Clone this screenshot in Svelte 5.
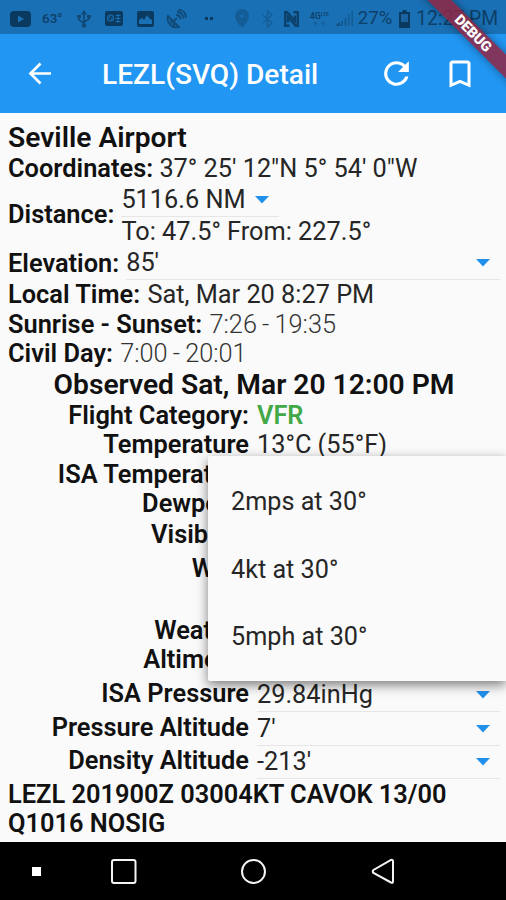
<script>
  const observed = [
    { label: 'Flight Category:', value: 'VFR', kind: 'vfr' },
    { label: 'Temperature', value: '13°C (55°F)' },
    { label: 'ISA Temperature' },
    { label: 'Dewpoint' },
    { label: 'Visibility', kind: 'visibility' },
    { label: 'Wind', kind: 'wind' },
    { label: 'Weather' },
    { label: 'Altimeter' },
    { label: 'ISA Pressure', value: '29.84inHg', kind: 'select' },
    { label: 'Pressure Altitude', value: "7'", kind: 'select' },
    { label: 'Density Altitude', value: "-213'", kind: 'select' },
  ];

  const windOptions = ['2mps at 30°', '4kt at 30°', '5mph at 30°'];
</script>

{#snippet arrow()}
  <svg class="arrow" width="14" height="8" viewBox="0 0 14 8"><path d="M0 0h14L7 7.5z" /></svg>
{/snippet}

<div class="screen">
  <div class="status">
    <div class="notifications">
      <svg class="video" width="21" height="16" viewBox="0 0 21 16">
        <rect width="21" height="16" rx="4" fill="#0b3a60" />
        <path d="M8 4.5v7l6-3.5z" fill="#1a70b4" />
      </svg>
      <span class="degrees">63°</span>
      <svg class="usb" width="14" height="18" viewBox="0 0 14 18" fill="none" stroke="#0f4a78" stroke-width="1.8">
        <path d="M7 2v14M2 7v3l5 3M12 7v2l-5 3" />
        <path d="M4 4.500L7 0l3 4.500z" fill="#0f4a78" stroke="none" />
        <circle cx="7" cy="15.500" r="2.300" fill="#0f4a78" stroke="none" />
        <path d="M0 5h4v3H0zM10 5h4v3h-4z" fill="#0f4a78" stroke="none" />
      </svg>
      <svg class="card" width="18" height="15" viewBox="0 0 18 15">
        <rect width="18" height="15" rx="2" fill="#0b3a60" />
        <circle cx="5.500" cy="7" r="3" fill="none" stroke="#1a70b4" stroke-width="1.200" />
        <path d="M4 5l4 5M10.500 4.500h5M10.500 7.500h5M10.500 10.500h5M13 3v9" stroke="#1a70b4" stroke-width="1" />
      </svg>
      <svg class="photo" width="17" height="16" viewBox="0 0 17 16">
        <rect width="17" height="16" rx="2" fill="#0b3a60" />
        <path d="M2 13V9l3-2 2 2 3-5 2 3 3 2v4z" fill="#1a70b4" />
      </svg>
      <svg class="dish" width="21" height="20" viewBox="0 0 21 20" fill="none" stroke="#0f4a78" stroke-width="1.800">
        <path d="M2 7c-2 7 4 13 11 11zM4 10l6 6M4 14l4-2M7 17l2-4M7 13l4-4" />
        <path d="M10 6c3 0 4.500 2 4.500 4.500M11 3c4 0 6.500 3 6.500 6.500M12 .9c5 0 8 3 8 7.500" />
      </svg>
      <svg class="more" width="8" height="3" viewBox="0 0 8 3"><path d="M0 0h3v3H0zM5 0h3v3H5z" fill="#0b3a60" /></svg>
    </div>
    <div class="system">
      <svg class="pin" width="14" height="19" viewBox="0 0 14 19">
        <path d="M7 0a7 7 0 0 0-7 7c0 5 7 12 7 12s7-7 7-12a7 7 0 0 0-7-7z" fill="#145d97" />
        <circle cx="7" cy="7" r="1.500" fill="#1a70b4" />
      </svg>
      <svg class="bluetooth" width="11" height="18" viewBox="0 0 11 18" fill="none" stroke="#145d97" stroke-width="1.500">
        <path d="M1 5l9 8-4.500 4V1L10 5l-9 8" />
      </svg>
      <svg class="nfc" width="15" height="16" viewBox="0 0 15 16" fill="none" stroke="#0c416b">
        <path d="M5.500 14.800H1.200V1.200h2L11 10V4.500" stroke-width="2.400" />
        <path d="M9.500 1.200h4.300v13.600h-2L4 6v5.500" stroke-width="2.400" />
      </svg>
      <div class="lte">
        <span>4G</span><span class="tail">LTE</span>
        <svg width="12" height="5" viewBox="0 0 12 5"><path d="M0 1h4L2 5zM8 1h4l-2 4z" fill="#145d97" /></svg>
      </div>
      <svg class="signal" width="18" height="17" viewBox="0 0 18 17" fill="#105083">
        <path d="M0 16l5-4v4z" />
        <path d="M6 11h2v5H6zM9.500 8h2v8h-2zM13 4h1.500v12H13zM16.500 1H18v15h-1.500z" opacity=".65" />
      </svg>
      <span class="percent">27%</span>
      <svg class="battery" width="11" height="18" viewBox="0 0 11 18">
        <path d="M3.500 0h4v2H10q1 0 1 1v14q0 1-1 1H1q-1 0-1-1V3q0-1 1-1h2.500z" fill="#0b3a60" />
        <path d="M2 4h7v8H2z" fill="#1a63a0" />
      </svg>
      <span class="clock">12:27 PM</span>
    </div>
  </div>

  <header>
    <svg class="back" width="24" height="23" viewBox="0 0 24 23" fill="none" stroke="#fff" stroke-width="2.700">
      <path d="M23 11.500H2.500M12.500 1.500l-10 10 10 10" />
    </svg>
    <h1>LEZL(SVQ) Detail</h1>
    <svg class="refresh" width="37" height="37" viewBox="0 0 24 24" fill="#fff">
      <path d="M17.650 6.350A7.958 7.958 0 0 0 12 4a8 8 0 1 0 7.730 10h-2.080A6 6 0 1 1 12 6c1.660 0 3.140.690 4.220 1.780L13 11h7V4l-2.350 2.350z" />
    </svg>
    <svg class="bookmark" width="36" height="36" viewBox="0 0 24 24" fill="#fff">
      <path d="M17 3H7c-1.100 0-2 .900-2 2v16l7-3 7 3V5c0-1.100-.900-2-2-2zm0 15l-5-2.180L7 18V5h10v13z" />
    </svg>
  </header>

  <main>
    <h2>Seville Airport</h2>
    <div class="line"><b>Coordinates:</b> 37° 25' 12"N 5° 54' 0"W</div>
    <div class="distance">
      <b>Distance:</b>
      <div>
        <div class="dropdown short"><span>5116.6 NM</span>{@render arrow()}</div>
        <div class="line">To: 47.5° From: 227.5°</div>
      </div>
    </div>
    <div class="elevation">
      <b>Elevation:</b>
      <div class="dropdown"><span>85'</span>{@render arrow()}</div>
    </div>
    <div class="line"><b>Local Time:</b> <span class="time">Sat, Mar 20 8:27 PM</span></div>
    <div class="line"><b>Sunrise - Sunset:</b> <span class="time thin">7:26 - 19:35</span></div>
    <div class="line"><b>Civil Day:</b> <span class="time thin">7:00 - 20:01</span></div>

    <h2 class="centered">Observed Sat, Mar 20 12:00 PM</h2>
    {#each observed as row}
      <div class="row {row.kind ?? ''}">
        <b>{row.label}</b>
        {#if row.kind === 'select'}
          <div class="dropdown"><span>{row.value}</span>{@render arrow()}</div>
        {:else}
          <span class="value">{row.value ?? ''}</span>
        {/if}
      </div>
    {/each}
    <p class="metar">LEZL 201900Z 03004KT CAVOK 13/00 Q1016 NOSIG</p>
  </main>

  <nav>
    <svg width="506" height="58" viewBox="0 0 506 58" fill="none" stroke="#f4f4f4" stroke-width="2">
      <rect x="32" y="25" width="9" height="9" fill="#fff" stroke="none" />
      <rect x="112" y="18" width="23.500" height="23" rx="2" />
      <circle cx="253.500" cy="29.500" r="11.500" />
      <path d="M393 19.500v20q0 2-2 1L373.500 31q-1.500-1.500 0-3L391 18q2-.7 2 1.500z" />
    </svg>
  </nav>

  <div class="menu">
    {#each windOptions as option}
      <div class="option">{option}</div>
    {/each}
  </div>

  <div class="banner">DEBUG</div>
</div>

<style>
  :global(body) {
    margin: 0;
  }

  .screen {
    position: relative;
    display: flex;
    flex-direction: column;
    width: 506px;
    height: 900px;
    overflow: hidden;
    background: #fafafa;
    color: #262626;
    font-family: Roboto, sans-serif;
    font-size: 25.3px;
    line-height: 29.5px;
    font-weight: 400;
  }

  .status {
    display: flex;
    justify-content: space-between;
    box-sizing: border-box;
    height: 34px;
    padding: 3px 8px 0 10px;
    background: #1a70b4;
    color: #0d3f68;
    line-height: 1;
  }

  .notifications,
  .system {
    display: flex;
    align-items: center;
  }

  .degrees {
    width: 21px;
    margin: 0 14px 0 11px;
    font-size: 13.5px;
    font-weight: 500;
    white-space: nowrap;
  }

  .card {
    margin: 0 14px;
  }

  .dish {
    margin: 0 18px 0 12px;
  }

  .bluetooth {
    margin: 0 11px 0 13px;
  }

  .lte {
    display: flex;
    flex-wrap: wrap;
    justify-content: center;
    width: 21px;
    margin: 0 5px 0 10px;
    font-size: 9px;
    font-weight: 500;
  }

  .tail {
    font-size: 5px;
  }

  .percent {
    margin: 0 7px 0 5px;
    font-size: 18.5px;
  }

  .clock {
    margin-left: 6px;
    font-size: 19.3px;
    white-space: nowrap;
  }

  header {
    display: flex;
    align-items: center;
    height: 79px;
    padding: 0 28px;
    background: #2196f3;
    color: #fff;
  }

  h1 {
    flex: 1;
    margin: 2px 0 0 50px;
    font-size: 28.1px;
    font-weight: 550;
    line-height: 33px;
  }

  .bookmark {
    margin-left: 27px;
  }

  main {
    flex: 1;
    padding: 8px 6px 0 8px;
  }

  h2 {
    margin: 0;
    color: #111;
    font-size: 28.2px;
    font-weight: 600;
    line-height: 33px;
  }

  .centered {
    line-height: 32px;
    text-align: center;
  }

  b {
    color: #111;
    font-size: 25.4px;
    font-weight: 600;
  }

  .line {
    white-space: nowrap;
  }

  .distance,
  .elevation {
    display: flex;
    align-items: center;
    gap: 7px;
  }

  .dropdown {
    display: flex;
    flex: 1;
    align-items: center;
    justify-content: space-between;
    box-sizing: border-box;
    height: 33.5px;
    padding-right: 10px;
    border-bottom: 1px solid #e6e6e6;
  }

  .short {
    width: 158px;
  }

  .arrow {
    fill: #2090ea;
  }

  .time {
    margin-left: 1px;
  }

  .thin {
    color: #333;
    font-weight: 300;
    word-spacing: -1px;
  }

  .row {
    display: grid;
    grid-template-columns: 241px 1fr;
    gap: 8px;
    align-items: center;
    height: 29.5px;
  }

  .row.select {
    height: 33.7px;
  }

  .row b {
    text-align: right;
    white-space: nowrap;
  }

  .row.select b {
    padding-bottom: 3px;
  }

  .vfr .value {
    color: #43a847;
    font-weight: 600;
  }

  .row.visibility {
    height: 33px;
  }

  .row.wind {
    box-sizing: border-box;
    height: 64px;
    padding-top: 2px;
    align-items: start;
  }

  .row:not(.select) + .select {
    margin-top: 4px;
  }

  .metar {
    margin: 0;
    color: #111;
    font-size: 25.4px;
    font-weight: 600;
  }

  nav {
    height: 58px;
    background: #000;
  }

  .menu {
    position: absolute;
    top: 456px;
    left: 208px;
    width: 298px;
    height: 225px;
    box-sizing: border-box;
    padding: 12px 23px;
    border-radius: 2px 0 0 2px;
    background: #fafafa;
    box-shadow: 0 4px 12px rgba(0, 0, 0, 0.5);
    font-size: 25.2px;
  }

  .option {
    display: flex;
    align-items: center;
    height: 67.5px;
  }

  .banner {
    position: absolute;
    top: 25px;
    left: 373px;
    width: 200px;
    height: 17px;
    transform: rotate(45deg);
    background: rgba(144, 38, 66, 0.85);
    box-shadow: 0 0 8px rgba(0, 0, 0, 0.4);
    color: #fff;
    font-size: 14.3px;
    font-weight: 900;
    line-height: 17px;
    text-align: center;
  }
</style>
